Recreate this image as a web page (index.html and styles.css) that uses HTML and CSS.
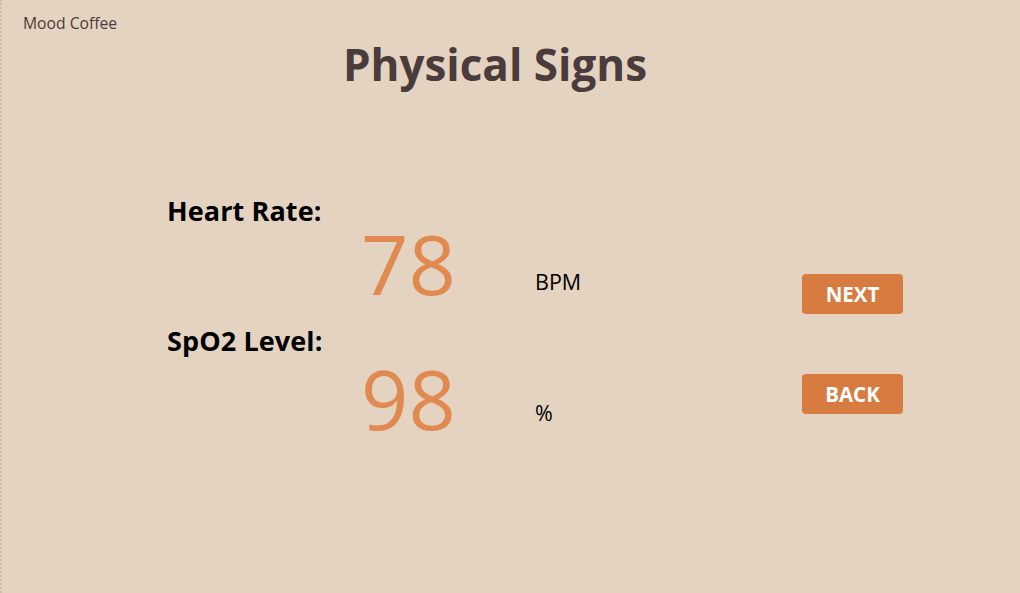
FILE: index.html
```html
<!DOCTYPE html>
<html lang="en">
<head>
<meta charset="utf-8">
<title>Physical Signs</title>
<link rel="stylesheet" href="styles.css">
</head>
<body>
<div class="page">
  <header class="brand">Mood Coffee</header>
  <h1 class="title">Physical Signs</h1>
  <section class="content">
    <div class="metrics">
      <div class="metric">
        <div class="label">Heart Rate:</div>
        <div class="reading">
          <span class="value">78</span>
          <span class="unit unit-bpm">BPM</span>
        </div>
      </div>
      <div class="metric">
        <div class="label">SpO2 Level:</div>
        <div class="reading reading-low">
          <span class="value">98</span>
          <span class="unit unit-pct">%</span>
        </div>
      </div>
    </div>
    <div class="actions">
      <button class="btn">NEXT</button>
      <button class="btn">BACK</button>
    </div>
  </section>
</div>
</body>
</html>
```

FILE: styles.css
```css
html, body {
  margin: 0;
  padding: 0;
  height: 100%;
}
body {
  background: #e4d3c1;
  font-family: "Open Sans", "Noto Sans", sans-serif;
}
.page {
  height: 100%;
  box-sizing: border-box;
  border-left: 2px dotted #c9bdb0;
}
.brand {
  padding: 13px 0 0 21px;
  font-size: 15.7px;
  color: #4a3c3c;
  line-height: 20px;
}
.title {
  margin: 0;
  padding: 1px 0 0 0;
  width: 986px;
  text-align: center;
  font-size: 44px;
  line-height: 60px;
  font-weight: 700;
  color: #4a3c3c;
}
.content {
  display: flex;
  padding: 100px 0 0 165px;
}
.metrics {
  width: 635px;
}
.label {
  font-size: 27px;
  font-weight: 700;
  color: #000;
  line-height: 34px;
  letter-spacing: 0.1px;
}
.reading {
  display: flex;
  align-items: flex-start;
  padding-left: 194px;
  height: 96px;
}
.reading-low {
  padding-top: 5px;
}
.value {
  font-size: 83px;
  line-height: 70px;
  color: #e08a52;
  width: 174px;
}
.unit {
  font-size: 21.5px;
  line-height: 28px;
  color: #000;
}
.unit-bpm {
  margin-top: 40px;
}
.unit-pct {
  margin-top: 36px;
}
.actions {
  display: flex;
  flex-direction: column;
  gap: 60px;
  padding-top: 80px;
}
.btn {
  width: 101px;
  height: 40px;
  border: none;
  border-radius: 4px;
  background: #d77b40;
  color: #fff;
  font-family: "Open Sans", "Noto Sans", sans-serif;
  font-size: 20.5px;
  font-weight: 700;
  padding: 0;
}
```
